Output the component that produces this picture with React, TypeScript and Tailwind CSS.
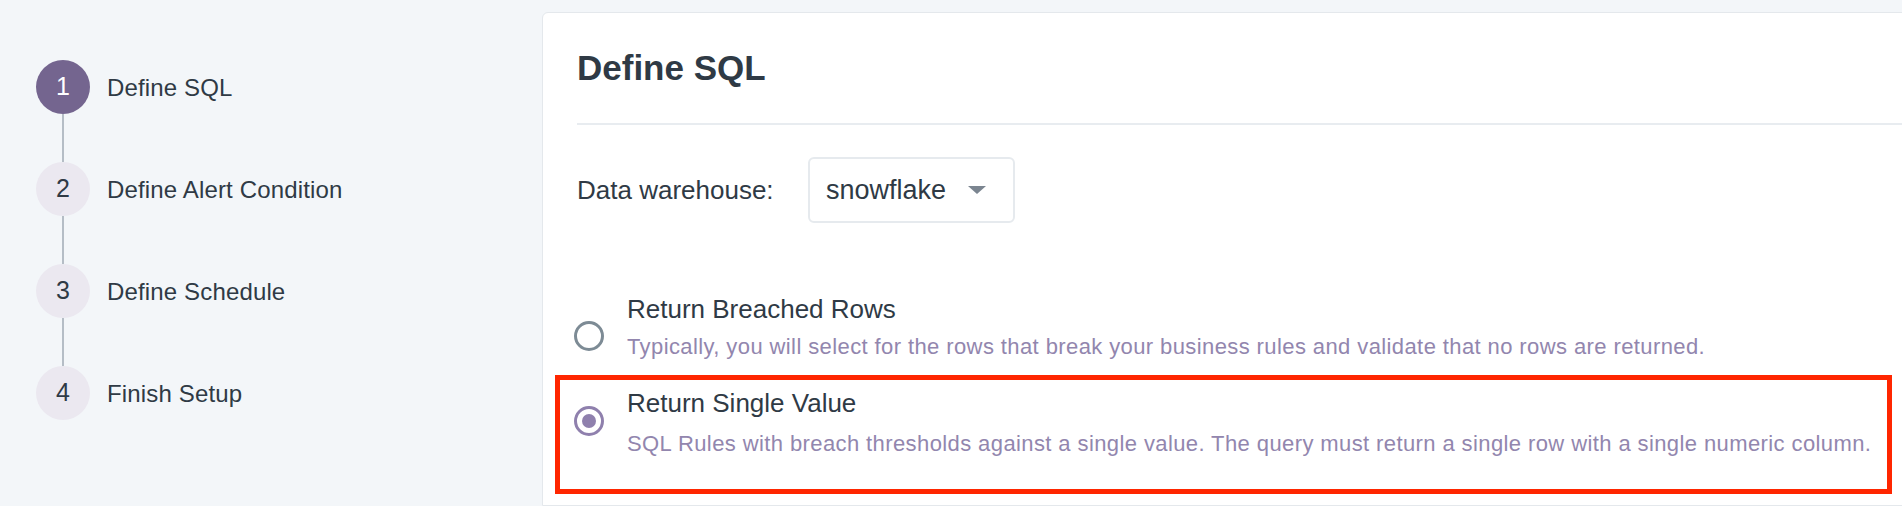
import React from "react";

const steps = [
  { n: 1, label: "Define SQL", active: true },
  { n: 2, label: "Define Alert Condition", active: false },
  { n: 3, label: "Define Schedule", active: false },
  { n: 4, label: "Finish Setup", active: false },
];

const Stepper = () => {
  return (
    <div className="w-[542px] shrink-0 pl-[36px] pt-[60px]">
      {steps.map((s, i) => (
        <div key={s.n}>
          <div className="flex items-center gap-[17px]">
            <div
              className={
                s.active
                  ? "w-[54px] h-[54px] rounded-full bg-[#74658f] text-white flex items-center justify-center text-[25px]"
                  : "w-[54px] h-[54px] rounded-full bg-[#ebe8f0] text-[#2f3a45] flex items-center justify-center text-[25px]"
              }
            >
              {s.n}
            </div>
            <span className="text-[24px] leading-[29px] tracking-[0.15px] text-[#2f3a45]">{s.label}</span>
          </div>
          {i < steps.length - 1 && (
            <div className="w-[54px] flex justify-center">
              <div className="w-[2px] h-[48px] bg-[#b5bdc6]" />
            </div>
          )}
        </div>
      ))}
    </div>
  );
};

const Radio = ({ checked }: { checked: boolean }) => {
  return checked ? (
    <div className="w-[30px] h-[30px] rounded-full border-[3px] border-[#8f80ad] flex items-center justify-center shrink-0">
      <div className="w-[14px] h-[14px] rounded-full bg-[#8f80ad]" />
    </div>
  ) : (
    <div className="w-[30px] h-[30px] rounded-full border-[3px] border-[#7d8b95] shrink-0" />
  );
};

export default function App() {
  return (
    <div
      className="relative flex h-[506px] w-full overflow-hidden bg-[#f3f6f9]"
      style={{ fontFamily: '"Liberation Sans", Arial, sans-serif' }}
    >
      <Stepper />

      <div className="flex-1 -mr-[20px] mt-[12px] bg-white border border-[#e4e8ec] rounded-tl-md pl-[34px] pt-[34px]">
        <h1 className="text-[35px] leading-[42px] font-bold text-[#2f3a45]">Define SQL</h1>
        <div className="h-[2px] bg-[#e8ecf0] mt-[34px]" />

        <div className="flex items-center mt-[32px]">
          <span className="text-[26px] text-[#2f3a45] w-[231px]">Data warehouse:</span>
          <button className="h-[66px] w-[207px] border-2 border-[#e6eaee] rounded-[6px] flex items-center pl-[16px] pr-[27px] justify-between">
            <span className="text-[27px] text-[#2f3a45]">snowflake</span>
            <svg width="18" height="8" viewBox="0 0 18 8">
              <polygon points="0,0 18,0 9,8" fill="#7b8590" />
            </svg>
          </button>
        </div>

        <div className="mt-[70px] -ml-[3px] flex items-start gap-[23px]">
          <div className="mt-[28px]">
            <Radio checked={false} />
          </div>
          <div>
            <div className="text-[26px] leading-[32px] text-[#2f3a45]">Return Breached Rows</div>
            <div className="mt-[8px] text-[22px] leading-[28px] tracking-[0.4px] text-[#9286ae]">
              Typically, you will select for the rows that break your business rules and validate that no rows are returned.
            </div>
          </div>
        </div>

        <div className="mt-[26px] -ml-[3px] flex items-start gap-[23px]">
          <div className="mt-[19px]">
            <Radio checked={true} />
          </div>
          <div>
            <div className="text-[26px] leading-[32px] text-[#2f3a45]">Return Single Value</div>
            <div className="mt-[11px] text-[22px] leading-[28px] tracking-[0.4px] text-[#9286ae]">
              SQL Rules with breach thresholds against a single value. The query must return a single row with a single numeric column.
            </div>
          </div>
        </div>
      </div>

      <div className="absolute left-[555px] top-[375px] w-[1337px] h-[119px] border-[5px] border-[#ff2600] pointer-events-none" />
    </div>
  );
}
